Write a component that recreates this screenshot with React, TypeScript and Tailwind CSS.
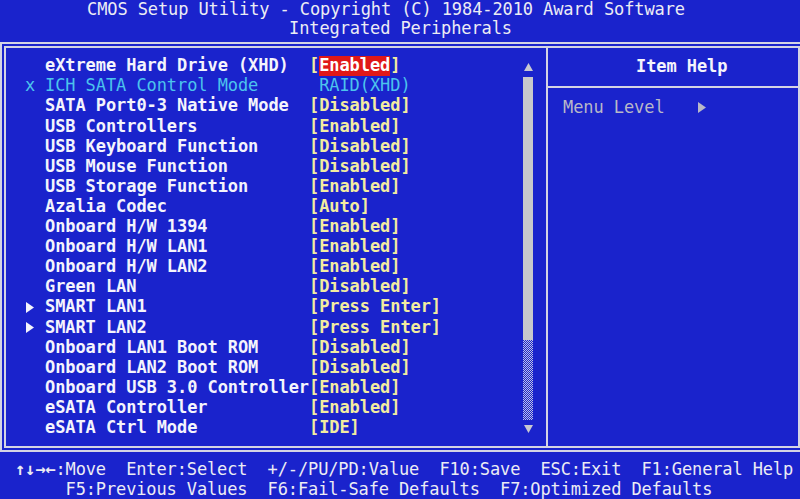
import React from "react";

type Row = {
  label: string;
  value: string;
  mark?: "x" | "arrow";
  selected?: boolean;
  locked?: boolean;
};

const rows: Row[] = [
  { label: "eXtreme Hard Drive (XHD)", value: "Enabled", selected: true },
  { label: "ICH SATA Control Mode", value: " RAID(XHD)", mark: "x", locked: true },
  { label: "SATA Port0-3 Native Mode", value: "[Disabled]" },
  { label: "USB Controllers", value: "[Enabled]" },
  { label: "USB Keyboard Function", value: "[Disabled]" },
  { label: "USB Mouse Function", value: "[Disabled]" },
  { label: "USB Storage Function", value: "[Enabled]" },
  { label: "Azalia Codec", value: "[Auto]" },
  { label: "Onboard H/W 1394", value: "[Enabled]" },
  { label: "Onboard H/W LAN1", value: "[Enabled]" },
  { label: "Onboard H/W LAN2", value: "[Enabled]" },
  { label: "Green LAN", value: "[Disabled]" },
  { label: "SMART LAN1", value: "[Press Enter]", mark: "arrow" },
  { label: "SMART LAN2", value: "[Press Enter]", mark: "arrow" },
  { label: "Onboard LAN1 Boot ROM", value: "[Disabled]" },
  { label: "Onboard LAN2 Boot ROM", value: "[Disabled]" },
  { label: "Onboard USB 3.0 Controller", value: "[Enabled]" },
  { label: "eSATA Controller", value: "[Enabled]" },
  { label: "eSATA Ctrl Mode", value: "[IDE]" },
];

function Tri({ dir, className }: { dir: "up" | "down" | "right"; className?: string }) {
  const pts = dir === "up" ? "4.5,0 9,8 0,8" : dir === "down" ? "0,0 9,0 4.5,8" : "0,0 8,5.5 0,11";
  const w = dir === "right" ? 8 : 9;
  const h = dir === "right" ? 11 : 8;
  return (
    <svg width={w} height={h} viewBox={`0 0 ${w} ${h}`} className={className}>
      <polygon points={pts} fill="currentColor" />
    </svg>
  );
}

function ItemRow({ row }: { row: Row }) {
  return (
    <div className="flex h-[20.1px] items-center whitespace-pre">
      <div className="w-[20px] flex items-center">
        {row.mark === "x" && <span className="text-[#4cc4ec]">x</span>}
        {row.mark === "arrow" && <Tri dir="right" className="text-[#f4f4fc] ml-[1px]" />}
      </div>
      <div className={`w-[264px] ${row.locked ? "text-[#4cc4ec] font-normal" : "text-[#f4f4fc] font-bold"}`}>
        {row.label}
      </div>
      {row.selected ? (
        <div className="font-bold text-[#f2eca0] flex items-center">
          [<span className="bg-[#e01818] text-white h-[20px] flex items-center">{row.value}</span>]
        </div>
      ) : (
        <div className={row.locked ? "text-[#4cc4ec]" : "font-bold text-[#f2eca0]"}>{row.value}</div>
      )}
    </div>
  );
}

export default function App() {
  return (
    <div className="w-[800px] h-[499px] overflow-hidden bg-[#1a23cc] font-['DejaVu_Sans_Mono',monospace] flex flex-col">
      {/* Title */}
      <header className="h-[42px] shrink-0 pl-[87px] text-[17px] leading-[19px] tracking-[-0.1px] text-[#ececf4] whitespace-pre">
        <div>CMOS Setup Utility - Copyright (C) 1984-2010 Award Software</div>
        <div className="pl-[202px]">Integrated Peripherals</div>
      </header>

      {/* Main frame */}
      <main className="w-[804px] h-[410px] shrink-0 border-[6px] border-double border-[#d4d4e4] flex">
        <section className="w-[540px] flex">
          <div className="flex-1 pt-[8px] pl-[19px] text-[17px] tracking-[-0.08px]">
            {rows.map((r) => (
              <ItemRow key={r.label} row={r} />
            ))}
          </div>
          <div className="w-[10px] mr-[13px] pt-[15px] flex flex-col items-center text-[#c8c8d0]">
            <Tri dir="up" />
            <div className="mt-[6px] w-[10px] h-[263px] bg-[#c8c8cc]" />
            <div className="w-[10px] h-[80px] bg-[repeating-conic-gradient(#c0c2e4_0%_25%,transparent_0%_50%)] bg-size-[2px_2px]" />
            <Tri dir="down" className="mt-[5px]" />
          </div>
        </section>

        <aside className="flex-1 border-l-2 border-[#d4d4e4] text-[17px] tracking-[-0.08px]">
          <div className="h-[40px] border-b-2 border-[#d4d4e4] pl-[88px] flex items-center font-bold text-[#f4f4fc]">
            Item Help
          </div>
          <div className="pt-[9px] pl-[15px] leading-[20px] flex items-center text-[#b8b8c8] whitespace-pre">
            <span>Menu Level</span>
            <Tri dir="right" className="ml-[33px] text-[#b8b8c8]" />
          </div>
        </aside>
      </main>

      {/* Key help */}
      <footer className="pt-[7px] pl-[15px] text-[17px] leading-[20px] tracking-[-0.13px] text-[#ececf4] whitespace-pre">
        <div>
          <span className="font-bold">↑↓→←</span>:Move  Enter:Select  +/-/PU/PD:Value  F10:Save  ESC:Exit  F1:General Help
        </div>
        <div>     F5:Previous Values  F6:Fail-Safe Defaults  F7:Optimized Defaults</div>
      </footer>
    </div>
  );
}
